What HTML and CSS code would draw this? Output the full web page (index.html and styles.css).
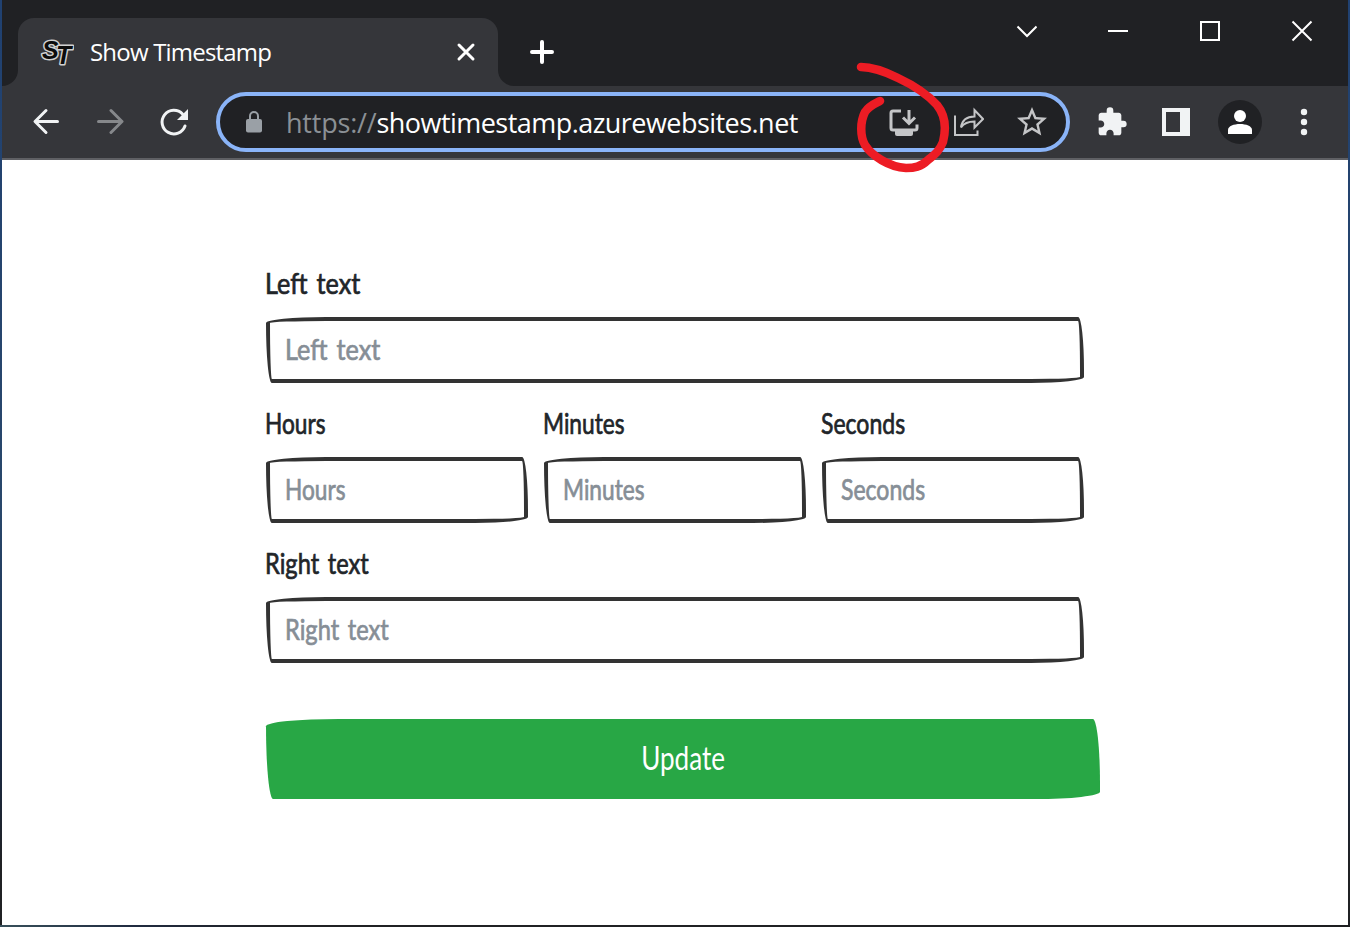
FILE: index.html
```html
<!DOCTYPE html>
<html lang="en">
<head>
<meta charset="utf-8">
<title>Show Timestamp</title>
<link rel="stylesheet" href="styles.css">
</head>
<body>
<div class="desktop">
  <div class="window">
    <header class="tabstrip">
      <div class="tab">
        <svg class="favicon" width="34" height="34" viewBox="0 0 34 34"><text x="2 16" y="24 29" class="fav">ST</text></svg>
        <span class="tab-title">Show Timestamp</span>
        <svg class="tab-close" width="20" height="20" viewBox="0 0 20 20"><path d="M3 3 17 17M17 3 3 17"/></svg>
        <svg class="flare flare-left" width="16" height="16" viewBox="0 0 16 16"><path d="M16 0V16H0A16 16 0 0 0 16 0Z"/></svg>
        <svg class="flare flare-right" width="16" height="16" viewBox="0 0 16 16"><path d="M0 0V16H16A16 16 0 0 1 0 0Z"/></svg>
      </div>
      <svg class="new-tab" width="24" height="24" viewBox="0 0 24 24"><path d="M12 2V22M2 12H22"/></svg>
      <div class="controls">
        <svg width="22" height="22" viewBox="0 0 22 22"><path d="M2.500 6.500 12 16 21.500 6.500"/></svg>
        <svg width="22" height="22" viewBox="0 0 22 22"><path d="M1 11H21"/></svg>
        <svg width="22" height="22" viewBox="0 0 22 22"><path d="M2 2H20V20H2Z"/></svg>
        <svg width="22" height="22" viewBox="0 0 22 22"><path d="M1.500 1.500 20.500 20.500M20.500 1.500 1.500 20.500"/></svg>
      </div>
    </header>
    <nav class="toolbar">
      <svg class="nav-icon" width="32" height="32" viewBox="0 0 32 32"><path d="M29.500 15.500H7.500M18 4.500 7 15.500 18 26.500"/></svg>
      <svg class="nav-icon dim" width="32" height="32" viewBox="0 0 32 32"><path d="M6.500 15.500H28M19 4.500 30 15.500 19 26.500"/></svg>
      <svg class="nav-icon" width="32" height="32" viewBox="0 0 32 32"><path d="M27 20A11.800 11.800 0 1 1 24.500 8"/><path class="solid" d="M30 3V14H19Z"/></svg>
      <div class="omnibox">
        <svg class="lock" width="16" height="22" viewBox="0 0 16 22"><rect x="0" y="8" width="16" height="13.500" rx="2"/><path d="M4 9V5A4 4 0 0 1 12 5V9"/></svg>
        <div class="url"><span class="scheme">https://</span>showtimestamp.azurewebsites.net</div>
        <svg class="install" width="30" height="30" viewBox="0 0 30 30"><path d="M12 4H4Q2 4 2 6V21Q2 23 4 23H26Q28 23 28 21V17.500"/><path d="M20 3V15M14 10.500 20 16.500 26 10.500"/><path class="base" d="M6 23H24V27Q24 29 22 29H8Q6 29 6 27Z"/></svg>
        <svg class="share" width="32" height="32" viewBox="0 0 32 32"><path d="M3 9.500V29H25.500V24.500"/><path d="M9 21.500C10 14 14.500 10.500 22.500 10.500V4L31 13 22.500 21.500V15.500C16 15.500 12 17 9 21.500Z"/></svg>
        <svg class="star" width="36" height="36" viewBox="0 0 24 24"><path d="M22 9.240l-7.190-.620L12 2 9.190 8.630 2 9.240l5.460 4.730L5.820 21 12 17.270 18.180 21l-1.630-7.030L22 9.240zM12 15.400l-3.760 2.270 1-4.280-3.320-2.880 4.380-.380L12 6.100l1.710 4.040 4.380.380-3.320 2.880 1 4.280L12 15.400z"/></svg>
      </div>
      <div class="actions">
        <svg class="puzzle" width="32" height="32" viewBox="0 0 24 24"><path d="M20.500 11H19V7c0-1.100-.900-2-2-2h-4V3.500a2.500 2.500 0 0 0-5 0V5H4c-1.100 0-1.990.900-1.990 2v3.800H3.500c1.490 0 2.700 1.210 2.700 2.700s-1.210 2.700-2.700 2.700H2V20c0 1.100.900 2 2 2h3.800v-1.500c0-1.490 1.210-2.700 2.700-2.700s2.700 1.210 2.700 2.700V22H17c1.100 0 2-.900 2-2v-4h1.500a2.500 2.500 0 0 0 0-5z"/></svg>
        <svg class="panel" width="28" height="28" viewBox="0 0 28 28"><path fill-rule="evenodd" d="M0 0H28V28H0ZM4 4V24H18V4Z"/></svg>
        <div class="avatar"><svg width="24" height="24" viewBox="0 0 24 24"><circle cx="12" cy="6" r="6"/><path d="M0 24V20C0 16 6 14 12 14S24 16 24 20V24Z"/></svg></div>
        <svg class="more" width="8" height="28" viewBox="0 0 8 28"><circle cx="4" cy="4" r="3.200"/><circle cx="4" cy="14" r="3.200"/><circle cx="4" cy="24" r="3.200"/></svg>
      </div>
    </nav>
    <main class="page">
      <form class="form">
        <div class="group">
          <label class="label"><span class="hand left-text">Left text</span></label>
          <div class="field"><span class="hand left-text">Left text</span></div>
        </div>
        <div class="row">
          <div class="group">
            <label class="label"><span class="hand">Hours</span></label>
            <div class="field"><span class="hand">Hours</span></div>
          </div>
          <div class="group">
            <label class="label"><span class="hand">Minutes</span></label>
            <div class="field"><span class="hand">Minutes</span></div>
          </div>
          <div class="group">
            <label class="label"><span class="hand seconds">Seconds</span></label>
            <div class="field"><span class="hand seconds">Seconds</span></div>
          </div>
        </div>
        <div class="group">
          <label class="label"><span class="hand right-text">Right text</span></label>
          <div class="field"><span class="hand right-text">Right text</span></div>
        </div>
        <button class="submit" type="button"><span class="submit-text">Update</span></button>
      </form>
    </main>
  </div>
  <svg class="annotation" width="100" height="120" viewBox="852 56 100 120"><path d="M861 67C873 67 888 73 898 78C913 85 927 94 937 105C946 116 946 130 943 142C939 152 934 155 928 160C921 167 914 168 906 168C889 167 872 156 865 145C860 136 860 122 865 112C869 106 874 104 880 101"/></svg>
</div>
</body>
</html>
```
FILE: styles.css
```css
* { box-sizing: border-box; }
body { margin: 0; overflow: hidden; font-family: "Open Sans", "Noto Sans", sans-serif; }
svg { display: block; flex: none; fill: none; }
.desktop {
  position: relative; width: 1350px; height: 927px; padding: 0 2px 2px;
  background: linear-gradient(90deg, #38505b, #202b40 10%, #202124 20%, #202124 80%, #1d1e20) bottom / 100% 2px no-repeat,
    linear-gradient(#204171, #29476b 55%, #192b48 80%, #202124 93%);
}
.window { height: 925px; display: flex; flex-direction: column; background: #fff; }

.tabstrip { height: 86px; display: flex; align-items: flex-start; padding-left: 16px; background: #202124; }
.tab { position: relative; display: flex; align-items: center; width: 480px; height: 68px; margin-top: 18px; padding: 0 22px; background: #35363a; border-radius: 16px 16px 0 0; }
.fav { font: italic bold 25px "Liberation Sans", sans-serif; fill: #0c0c0c; stroke: #d0d0d0; stroke-width: 3px; stroke-linejoin: round; paint-order: stroke; }
.tab-title { margin-left: 16px; flex: 1; color: #fff; font-size: 24px; line-height: 34px; letter-spacing: -0.8px; white-space: nowrap; }
.tab-close { stroke: #fff; stroke-width: 3; stroke-linecap: round; }
.flare { position: absolute; bottom: 0; fill: #35363a; }
.flare-left { left: -16px; }
.flare-right { right: -16px; }
.new-tab { margin: 40px 0 0 32px; stroke: #fff; stroke-width: 4; stroke-linecap: round; }
.controls { display: flex; gap: 70px; margin: 20px 35px 0 auto; stroke: #fff; stroke-width: 2; }

.toolbar { height: 74px; display: flex; align-items: center; padding-left: 28px; background: #35363a; border-bottom: 2px solid #5f6064; }
.nav-icon { margin-right: 32px; stroke: #f1f3f4; stroke-width: 3; stroke-linecap: round; stroke-linejoin: round; }
.nav-icon:first-child, .dim { position: relative; left: -2px; }
.nav-icon .solid { fill: #f1f3f4; stroke: none; }
.dim { stroke: #86888b; }
.omnibox { display: flex; align-items: center; width: 854px; height: 60px; margin-left: -6px; padding: 0 16px 0 26px; border: 4px solid #8ab4f8; border-radius: 30px; background: #202124; }
.lock { fill: #9aa0a6; }
.lock path { fill: none; stroke: #9aa0a6; stroke-width: 2; }
.url { flex: 1; margin-left: 24px; color: #fff; font-size: 27px; line-height: 40px; padding-top: 1px; letter-spacing: -0.54px; white-space: nowrap; }
.scheme { color: #8b9095; letter-spacing: -0.2px; }
.install { stroke: #c4c5c7; stroke-width: 3; }
.install .base { fill: #c4c5c7; stroke: none; }
.share { margin-left: 33px; stroke: #c4c5c7; stroke-width: 2; }
.star { margin-left: 30px; fill: #c4c5c7; }
.actions { flex: 1; display: flex; align-items: center; }
.actions svg { fill: #f1f3f4; }
.puzzle { margin-left: 26px; }
.panel { margin-left: 34px; }
.avatar { width: 44px; height: 44px; margin-left: 28px; display: flex; align-items: center; justify-content: center; border-radius: 50%; background: #202124; }
.actions .avatar svg { fill: #fff; }
.more { margin-left: 38px; }

.page { flex: 1; padding: 103px 0 0 264px; font-family: Lato, "Open Sans", sans-serif; }
.form { width: 834px; margin: 0; }
.group { width: 818px; height: 140px; }
.row { display: flex; gap: 16px; width: 818px; }
.row .group { width: 262px; }
.label { display: block; height: 54px; margin-left: -1px; line-height: 40px; color: #212529; }
.field { height: 66px; padding-left: 15px; line-height: 57px; color: #868e96; border: 4px solid #333; border-radius: 255px 25px 225px 25px / 25px 225px 25px 255px; }
.hand { display: inline-block; font-size: 28px; transform: scaleX(0.81); transform-origin: left; -webkit-text-stroke: 0.7px currentColor; white-space: nowrap; }
.left-text { transform: scaleX(0.9); word-spacing: 3px; }
.right-text { transform: scaleX(0.845); word-spacing: 3px; }
.seconds { transform: scaleX(0.822); }
.submit { display: block; width: 834px; height: 80px; margin-top: 36px; padding: 0 0 4px; border: 0; border-radius: 255px 25px 225px 25px / 25px 225px 25px 255px; background: #28a745; color: #fff; font-family: inherit; }
.submit-text { display: inline-block; font-size: 33px; line-height: 40px; transform: scaleX(0.79); }
.annotation { position: absolute; left: 852px; top: 56px; stroke: #ed1c24; stroke-width: 8.500; stroke-linecap: round; }
```
